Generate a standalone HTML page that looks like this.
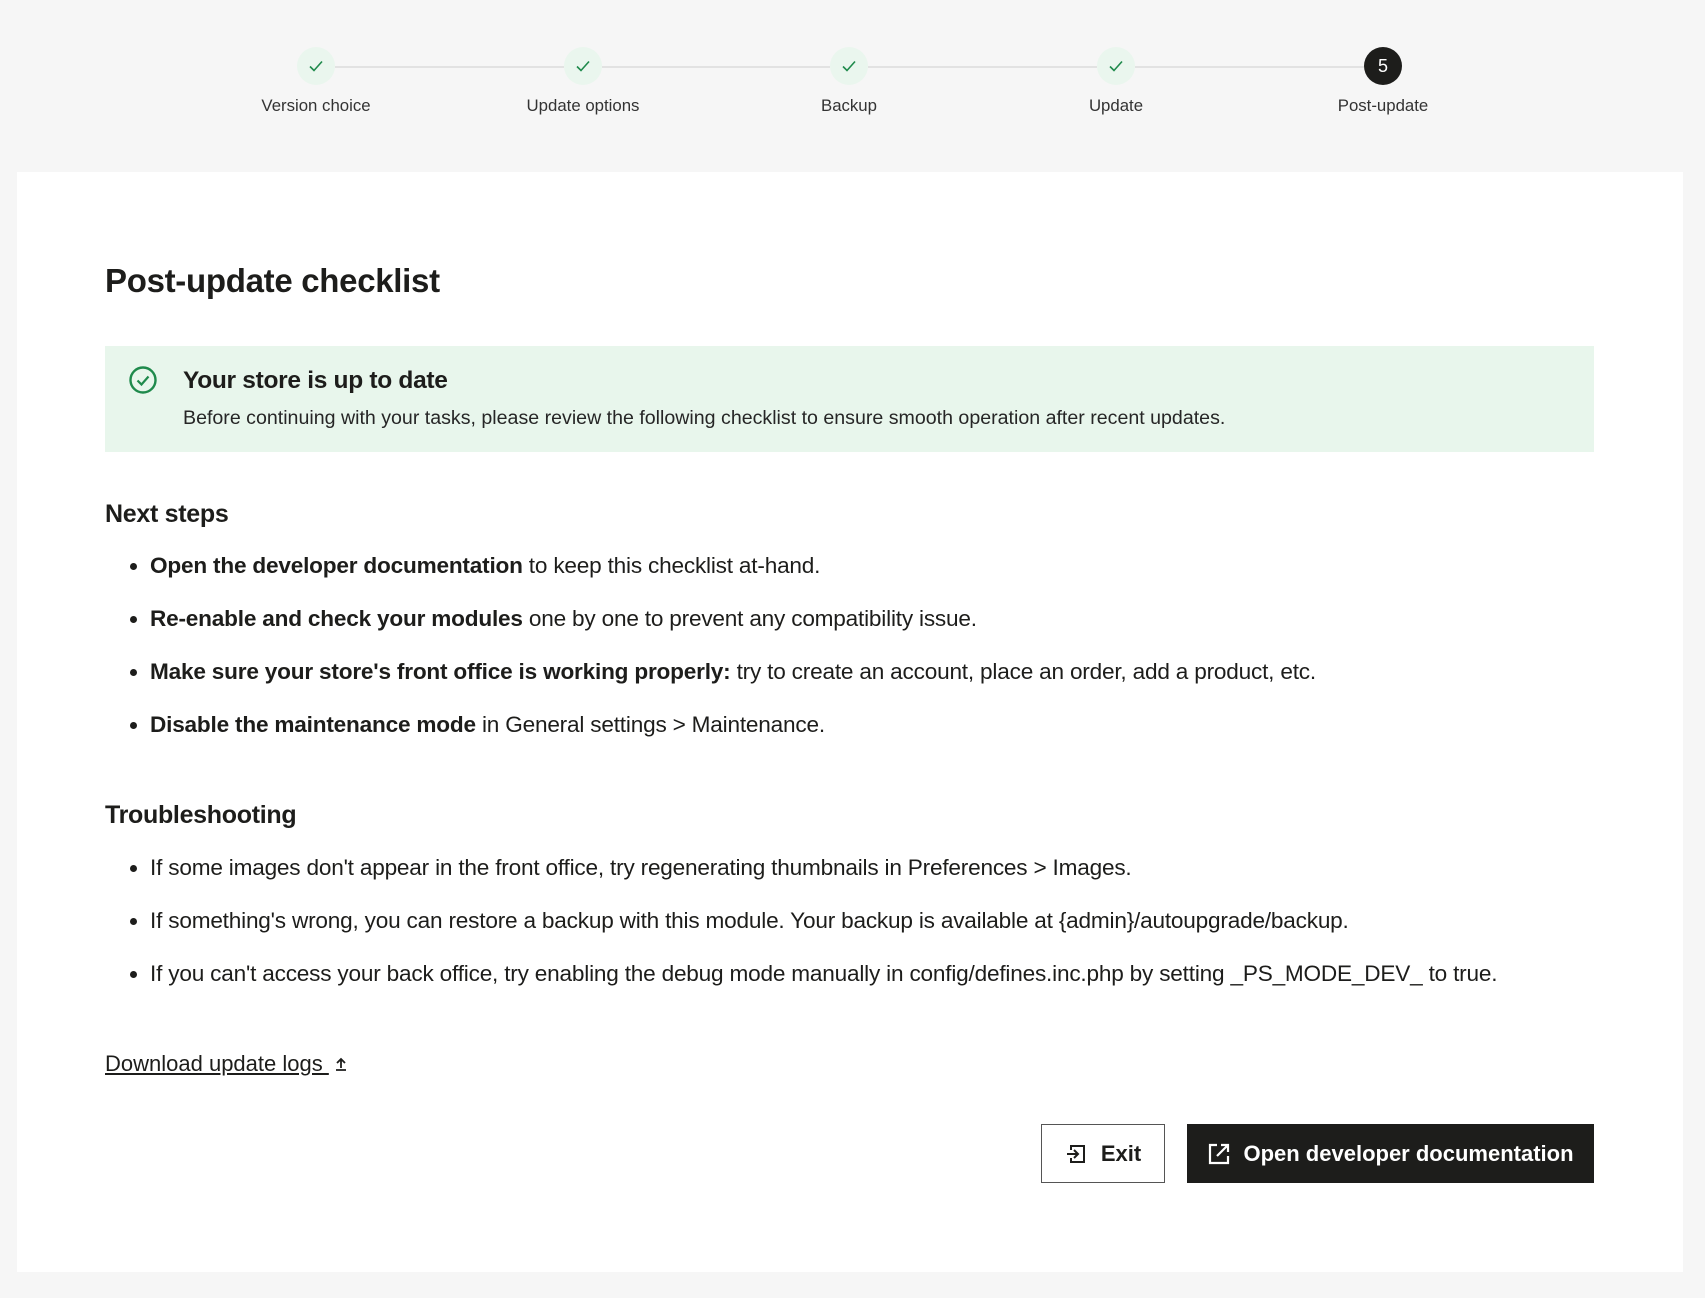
<!DOCTYPE html>
<html><head><meta charset="utf-8"><style>
*{margin:0;padding:0;box-sizing:border-box}
body{width:1705px;height:1298px;background:#f6f6f6;font-family:"Liberation Sans",Arial,sans-serif;color:#1d1d1b;position:relative;overflow:hidden}
.abs{position:absolute}
.line{position:absolute;top:66px;height:2px;background:#e2e2e2}
.step{position:absolute;top:47px;width:200px;margin-left:-100px;text-align:center}
.circ{width:38px;height:38px;border-radius:50%;margin:0 auto;background:#eaf6ee;display:flex;align-items:center;justify-content:center}
.circ.on{background:#1d1d1b;color:#fff;font-size:18px}
.lbl{margin-top:11px;font-size:16.8px;color:#333}
.card{position:absolute;left:17px;top:172px;width:1666px;height:1100px;background:#fff}
h1{position:absolute;left:105px;top:262px;font-size:33px;font-weight:bold;letter-spacing:-0.3px}
.alert{position:absolute;left:105px;top:346px;width:1489px;height:106px;background:#e8f6ec}
h2{position:absolute;left:105px;font-size:25px;font-weight:bold;letter-spacing:-0.3px}
ul{position:absolute;left:128px;list-style:none;font-size:22.6px}
li{height:53px;line-height:26px;position:relative;padding-left:22px;letter-spacing:-0.2px;white-space:nowrap}
li:before{content:"";position:absolute;left:2px;top:10px;width:7px;height:7px;border-radius:50%;background:#1d1d1b}
.btn{position:absolute;top:1124px;height:59px;display:flex;align-items:center;justify-content:center;font-size:22px;font-weight:bold}
</style></head><body>
<div class="line" style="left:335px;width:229px"></div>
<div class="line" style="left:602px;width:228px"></div>
<div class="line" style="left:868px;width:229px"></div>
<div class="line" style="left:1135px;width:229px"></div>
<div class="step" style="left:316px"><div class="circ"><svg width="16" height="16" viewBox="0 0 16 16"><path d="M2 8.5l4 4 8-9" fill="none" stroke="#1f8a4c" stroke-width="1.6"/></svg></div><div class="lbl">Version choice</div></div>
<div class="step" style="left:583px"><div class="circ"><svg width="16" height="16" viewBox="0 0 16 16"><path d="M2 8.5l4 4 8-9" fill="none" stroke="#1f8a4c" stroke-width="1.6"/></svg></div><div class="lbl">Update options</div></div>
<div class="step" style="left:849px"><div class="circ"><svg width="16" height="16" viewBox="0 0 16 16"><path d="M2 8.5l4 4 8-9" fill="none" stroke="#1f8a4c" stroke-width="1.6"/></svg></div><div class="lbl">Backup</div></div>
<div class="step" style="left:1116px"><div class="circ"><svg width="16" height="16" viewBox="0 0 16 16"><path d="M2 8.5l4 4 8-9" fill="none" stroke="#1f8a4c" stroke-width="1.6"/></svg></div><div class="lbl">Update</div></div>
<div class="step" style="left:1383px"><div class="circ on">5</div><div class="lbl">Post-update</div></div>

<div class="card"></div>
<h1>Post-update checklist</h1>
<div class="alert">
 <svg class="abs" style="left:23px;top:19px" width="30" height="30" viewBox="0 0 30 30"><circle cx="15" cy="15" r="12.5" fill="none" stroke="#1f8a4c" stroke-width="2.4"/><path d="M9.5 15.5l4 4 7-8" fill="none" stroke="#1f8a4c" stroke-width="2.2"/></svg>
 <div class="abs" style="left:78px;top:21px;font-size:24.5px;font-weight:bold;letter-spacing:-0.3px">Your store is up to date</div>
 <div class="abs" style="left:78px;top:61px;font-size:19.6px;color:#262626;white-space:nowrap">Before continuing with your tasks, please review the following checklist to ensure smooth operation after recent updates.</div>
</div>

<h2 style="top:500px">Next steps</h2>
<ul style="top:553px">
<li><b>Open the developer documentation</b> to keep this checklist at-hand.</li>
<li><b>Re-enable and check your modules</b> one by one to prevent any compatibility issue.</li>
<li><b>Make sure your store's front office is working properly:</b> try to create an account, place an order, add a product, etc.</li>
<li><b>Disable the maintenance mode</b> in General settings &gt; Maintenance.</li>
</ul>
<h2 style="top:801px">Troubleshooting</h2>
<ul style="top:855px">
<li>If some images don't appear in the front office, try regenerating thumbnails in Preferences &gt; Images.</li>
<li>If something's wrong, you can restore a backup with this module. Your backup is available at {admin}/autoupgrade/backup.</li>
<li>If you can't access your back office, try enabling the debug mode manually in config/defines.inc.php by setting _PS_MODE_DEV_ to true.</li>
</ul>
<div class="abs" style="left:105px;top:1051px;font-size:22px;text-decoration:underline">Download update logs <svg width="16" height="16" viewBox="0 0 16 16" style="margin-left:4px;vertical-align:-1px"><path d="M8 12V3M4 7l4-4 4 4M3 14h10" fill="none" stroke="#1d1d1b" stroke-width="1.8"/></svg></div>

<div class="btn" style="left:1041px;width:124px;border:1.5px solid #555;background:#fff;color:#1d1d1b"><svg width="22" height="22" viewBox="0 0 22 22" style="margin-right:14px"><path d="M6 7V3h13v16H6v-4" fill="none" stroke="#1d1d1b" stroke-width="2"/><path d="M2 11h11M9 7l4 4-4 4" fill="none" stroke="#1d1d1b" stroke-width="2"/></svg>Exit</div>
<div class="btn" style="left:1187px;width:407px;background:#1d1d1b;color:#fff"><svg width="24" height="24" viewBox="0 0 24 24" style="margin-right:12px"><path d="M10 3H3v18h18v-7" fill="none" stroke="#fff" stroke-width="2.2"/><path d="M14 3h7v7M21 3L10 14" fill="none" stroke="#fff" stroke-width="2.2"/></svg>Open developer documentation</div>
</body></html>
